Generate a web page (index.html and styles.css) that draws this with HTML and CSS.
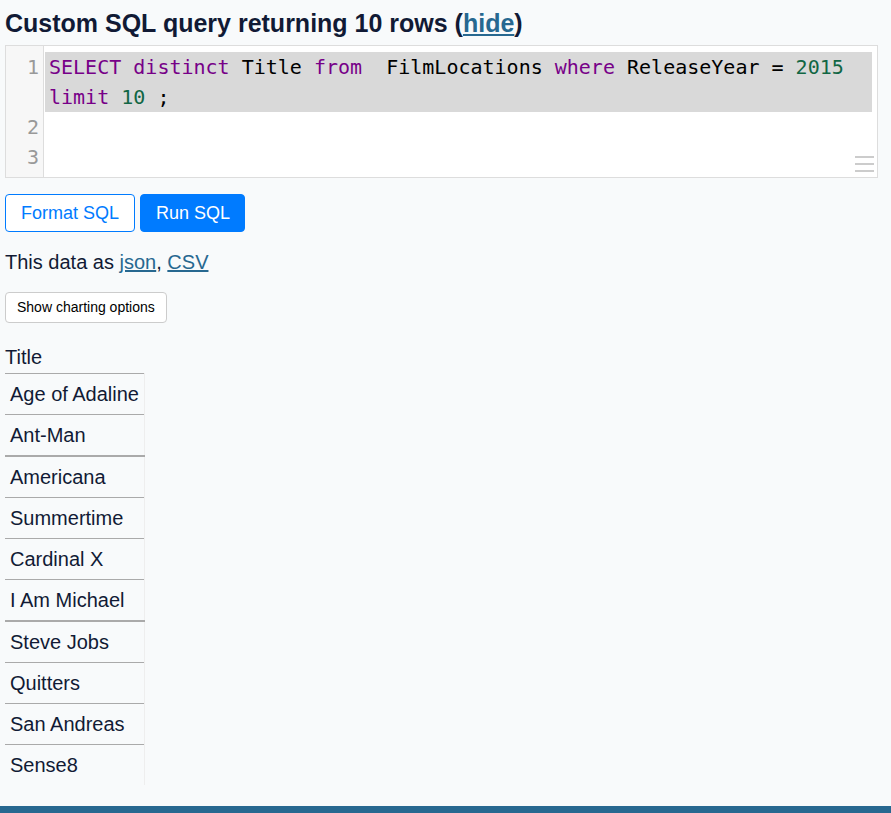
FILE: index.html
```html
<!DOCTYPE html>
<html lang="en">
<head>
<meta charset="utf-8">
<title>Custom SQL query</title>
<link rel="stylesheet" href="styles.css">
</head>
<body>
<section class="content">
  <h3 class="title">Custom SQL query returning 10 rows (<a href="#" class="link">hide</a>)</h3>

  <div class="editor">
    <div class="gutter">
      <div class="lnum lnum-wrap">1</div>
      <div class="lnum">2</div>
      <div class="lnum">3</div>
    </div>
    <div class="code">
      <div class="line selected"><span class="kw">SELECT</span> <span class="kw">distinct</span> Title <span class="kw">from</span>  FilmLocations <span class="kw">where</span> ReleaseYear = <span class="num">2015</span> <span class="kw">limit</span> <span class="num">10</span> ;</div>
      <div class="line"></div>
      <div class="line"></div>
    </div>
    <div class="grip"><span></span><span></span><span></span></div>
  </div>

  <div class="actions">
    <button class="btn btn-outline">Format SQL</button>
    <button class="btn btn-primary">Run SQL</button>
  </div>

  <p class="export">This data as <a href="#" class="link">json</a>, <a href="#" class="link">CSV</a></p>

  <button class="btn-small">Show charting options</button>

  <table class="rows">
    <thead>
      <tr><th>Title</th></tr>
    </thead>
    <tbody>
      <tr><td>Age of Adaline</td></tr>
      <tr><td>Ant-Man</td></tr>
      <tr class="thick"><td>Americana</td></tr>
      <tr><td>Summertime</td></tr>
      <tr><td>Cardinal X</td></tr>
      <tr><td>I Am Michael</td></tr>
      <tr class="thick"><td>Steve Jobs</td></tr>
      <tr><td>Quitters</td></tr>
      <tr><td>San Andreas</td></tr>
      <tr><td>Sense8</td></tr>
    </tbody>
  </table>
</section>
<footer class="footer"></footer>
</body>
</html>
```

FILE: styles.css
```css
html, body {
  margin: 0;
  padding: 0;
}
body {
  background: #f8fafb;
  color: #111a35;
  font-family: "Liberation Sans", Arial, Helvetica, sans-serif;
  font-size: 20px;
}
.content {
  padding: 8px 13px 21px 5px;
}
.link {
  color: #276890;
  text-decoration: underline;
}
.title {
  margin: 0 0 7px 0;
  font-size: 25px;
  line-height: 30px;
  font-weight: bold;
}

/* editor */
.editor {
  position: relative;
  display: flex;
  background: #fff;
  border: 1px solid #dddddd;
  font-family: "DejaVu Sans Mono", monospace;
  font-size: 20px;
  line-height: 30px;
}
.gutter {
  flex: 0 0 37px;
  background: #f7f7f7;
  border-right: 1px solid #dddddd;
  padding: 6px 0 5px 0;
  color: #999999;
  text-align: right;
}
.lnum {
  height: 30px;
  padding-right: 4px;
}
.lnum-wrap {
  height: 60px;
}
.code {
  flex: 1;
  padding: 6px 5px 5px 1px;
  color: #000;
}
.line {
  padding: 0 4px;
  white-space: pre-wrap;
  word-wrap: break-word;
  min-height: 30px;
}
.selected {
  background: #d9d9d9;
}
.kw {
  color: #770088;
}
.num {
  color: #116644;
}
.grip {
  position: absolute;
  right: 3px;
  bottom: 5px;
  width: 19px;
  display: flex;
  flex-direction: column;
  gap: 5px;
}
.grip span {
  display: block;
  height: 2px;
  background: #cccccc;
}

/* buttons */
.actions {
  display: flex;
  gap: 5px;
  margin-top: 16px;
}
.btn {
  font-family: "Liberation Sans", Arial, sans-serif;
  font-size: 18px;
  line-height: 26px;
  padding: 5px 15px;
  border-radius: 4px;
  border: 1px solid #007bff;
  cursor: pointer;
}
.btn-outline {
  background: #fff;
  color: #007bff;
}
.btn-primary {
  background: #007bff;
  color: #fff;
  padding: 5px 14px 5px 15px;
}
.export {
  margin: 15px 0 15px 0;
  line-height: 30px;
}
.btn-small {
  font-family: "Liberation Sans", Arial, sans-serif;
  font-size: 14px;
  line-height: 17px;
  padding: 6px 11px;
  background: #fff;
  color: #000;
  border: 1px solid #cccccc;
  border-radius: 4px;
  display: block;
}

/* table */
.rows {
  border-collapse: collapse;
  margin-top: 19px;
}
.rows th {
  text-align: left;
  font-weight: normal;
  padding: 0;
  line-height: 31px;
}
.rows td {
  border-top: 1px solid #aaaaaa;
  border-right: 1px solid #eeeeee;
  padding: 5px 5px 5px 5px;
  line-height: 30px;
}
.rows .thick td {
  border-top-width: 2px;
  padding-top: 5px;
}

.footer {
  background: #276890;
  height: 40px;
}
```
